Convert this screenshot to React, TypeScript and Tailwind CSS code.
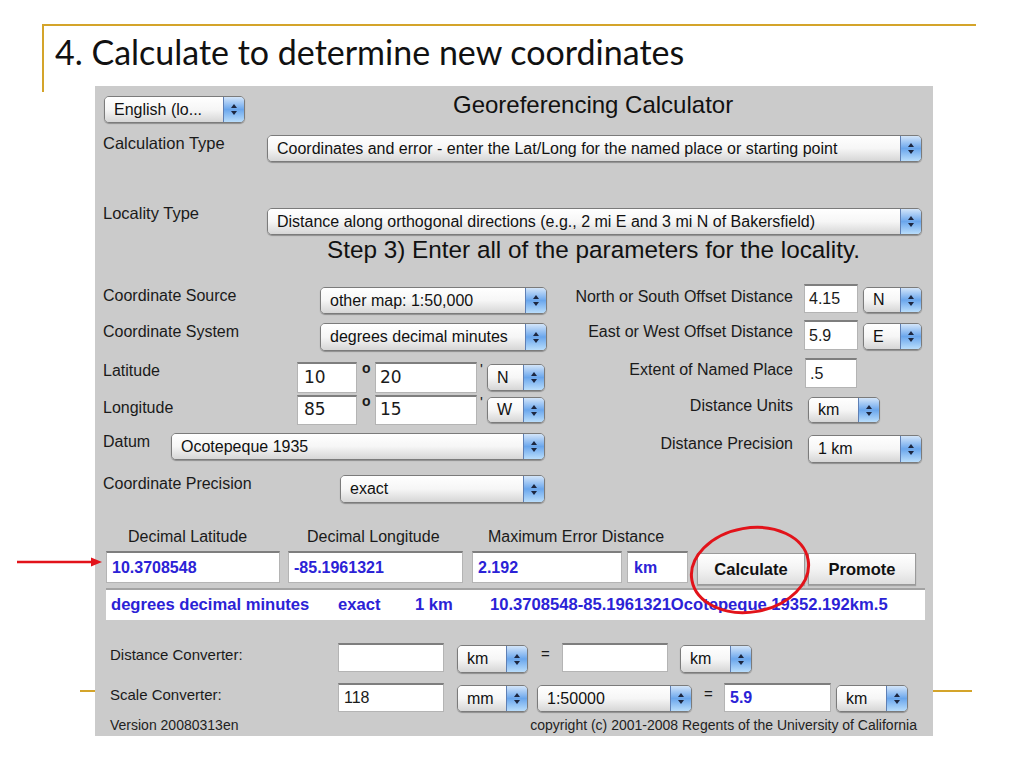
import type { ReactNode } from "react"

const sans = "font-['Liberation_Sans',Arial,sans-serif]"

function Arrows() {
  return (
    <svg width="8" height="13" viewBox="0 0 8 13">
      <path d="M4 1L7 5H1z" fill="#1d2740" />
      <path d="M4 12L7 8H1z" fill="#1d2740" />
    </svg>
  )
}

function Pop({ className, children }: { className: string; children: ReactNode }) {
  return (
    <div
      className={`flex shrink-0 items-stretch overflow-hidden rounded-[5px] border border-[#7b7b7b] shadow-[0_1px_1px_rgba(0,0,0,0.3)] ${className}`}
    >
      <div className="flex flex-1 items-center overflow-hidden whitespace-nowrap bg-linear-to-b from-white via-[#f6f6f6] to-[#d6d6d6] pl-[9px] text-[16px] text-[#111]">
        {children}
      </div>
      <div className="flex w-[21px] shrink-0 items-center justify-center border-l border-[#5e7fb4] bg-linear-to-b from-[#d3e5f9] via-[#6aa6ec] to-[#b9ddfb]">
        <Arrows />
      </div>
    </div>
  )
}

function Box({ className, children }: { className: string; children?: ReactNode }) {
  return (
    <div
      className={`flex shrink-0 bg-white border border-[#b4b4b4] border-t-[#7e7e7e] border-t-2 ${className}`}
    >
      {children}
    </div>
  )
}

function Btn({ children }: { children: ReactNode }) {
  return (
    <div className="flex h-[32px] w-[108px] shrink-0 items-center justify-center border border-[#9a9a9a] bg-linear-to-b from-white via-[#f3f3f3] to-[#dedede] text-[16.5px] font-bold text-[#111] shadow-[0_1px_1px_rgba(0,0,0,0.2)]">
      {children}
    </div>
  )
}

export default function App() {
  return (
    <div className={`relative h-[768px] w-[1024px] overflow-hidden bg-white ${sans}`}>
      {/* slide rule behind the screenshot */}
      <div className="absolute left-[80px] top-[690px] h-[2px] w-[892px] bg-[#d4a42a]" />

      <div className="ml-[42px] mt-[24px] h-[68px] w-[934px] border-l-2 border-t-2 border-[#d4a42a] pl-[11px] pt-[5px]">
        <h1 className="font-['Lato','Open_Sans',sans-serif] text-[34px] leading-[42px] text-[#111]">
          4. Calculate to determine new coordinates
        </h1>
      </div>

      <div className="relative z-10 -mt-[6px] ml-[95px] flex h-[650px] w-[838px] flex-col bg-[#cbcbcb] text-[16px] text-[#1a1a1a]">
        {/* header */}
        <div className="mt-[10px] flex h-[27px] items-center pl-[9px]">
          <Pop className="h-[27px] w-[141px]">English (lo...</Pop>
          <span className="mb-[10px] ml-[208px] text-[24px] leading-none text-[#111]">Georeferencing Calculator</span>
        </div>

        <div className="mt-[12px] flex h-[27px] items-start pl-[8px]">
          <span className="w-[164px] text-[16.5px] leading-[17px]">Calculation Type</span>
          <Pop className="h-[27px] w-[655px]">
            Coordinates and error - enter the Lat/Long for the named place or starting point
          </Pop>
        </div>

        <div className="mt-[46px] flex h-[27px] items-start pl-[8px]">
          <span className="-mt-[3px] w-[164px] text-[16.5px] leading-[17px]">Locality Type</span>
          <Pop className="h-[27px] w-[655px]">
            Distance along orthogonal directions (e.g., 2 mi E and 3 mi N of Bakersfield)
          </Pop>
        </div>

        <div className="mt-[2px] h-[26px] pl-[232px] text-[24.3px] leading-[26px] text-[#111]">
          Step 3) Enter all of the parameters for the locality.
        </div>

        {/* parameters */}
        <div className="mt-[21px] flex">
          <div className="flex w-[452px] flex-col pl-[8px]">
            <div className="mt-[3px] flex h-[27px]">
              <span className="w-[217px] leading-[17px]">Coordinate Source</span>
              <Pop className="h-[27px] w-[227px]">other map: 1:50,000</Pop>
            </div>
            <div className="mt-[9px] flex h-[28px]">
              <span className="w-[217px] leading-[17px]">Coordinate System</span>
              <Pop className="h-[28px] w-[227px]">degrees decimal minutes</Pop>
            </div>
            <div className="mt-[11px] flex h-[31px] items-center">
              <span className="w-[194px] self-start leading-[17px]">Latitude</span>
              <Box className="h-[31px] w-[60px] items-end pb-[2px] pl-[6px] font-['DejaVu_Sans',sans-serif] text-[17px]">10</Box>
              <span className="w-[18px] self-start pl-[5px] text-[14px] font-bold leading-[13px]">o</span>
              <Box className="h-[31px] w-[102px] items-end pb-[2px] pl-[4px] font-['DejaVu_Sans',sans-serif] text-[17px]">20</Box>
              <span className="w-[10px] self-start pl-[3px] text-[15px] leading-[14px]">'</span>
              <Pop className="h-[27px] w-[58px]">N</Pop>
            </div>
            <div className="mt-[2px] flex h-[30px] items-center">
              <span className="w-[194px] self-start pt-[4px] leading-[17px]">Longitude</span>
              <Box className="h-[30px] w-[60px] items-end pb-[2px] pl-[6px] font-['DejaVu_Sans',sans-serif] text-[17px]">85</Box>
              <span className="w-[18px] self-start pl-[5px] text-[14px] font-bold leading-[13px]">o</span>
              <Box className="h-[30px] w-[102px] items-end pb-[2px] pl-[4px] font-['DejaVu_Sans',sans-serif] text-[17px]">15</Box>
              <span className="w-[10px] self-start pl-[3px] text-[15px] leading-[14px]">'</span>
              <Pop className="h-[26px] w-[58px]">W</Pop>
            </div>
            <div className="mt-[8px] flex h-[27px]">
              <span className="w-[68px] leading-[17px]">Datum</span>
              <Pop className="h-[27px] w-[374px]">Ocotepeque 1935</Pop>
            </div>
            <div className="mt-[15px] flex h-[28px]">
              <span className="w-[237px] leading-[17px]">Coordinate Precision</span>
              <Pop className="h-[28px] w-[205px]">exact</Pop>
            </div>
          </div>

          <div className="flex flex-col">
            <div className="flex h-[29px]">
              <span className="w-[246px] pt-[4px] text-right leading-[17px]">North or South Offset Distance</span>
              <Box className="ml-[11px] h-[29px] w-[54px] items-center pl-[4px]">4.15</Box>
              <Pop className="ml-[5px] mt-[3px] h-[26px] w-[59px]">N</Pop>
            </div>
            <div className="mt-[7px] flex h-[30px]">
              <span className="w-[246px] pt-[3px] text-right leading-[17px]">East or West Offset Distance</span>
              <Box className="ml-[11px] h-[30px] w-[54px] items-center pl-[4px]">5.9</Box>
              <Pop className="ml-[5px] mt-[3px] h-[27px] w-[59px]">E</Pop>
            </div>
            <div className="mt-[8px] flex h-[30px]">
              <span className="w-[246px] pt-[3px] text-right leading-[17px]">Extent of Named Place</span>
              <Box className="ml-[12px] h-[30px] w-[52px] items-center pl-[4px]">.5</Box>
            </div>
            <div className="mt-[9px] flex h-[26px]">
              <span className="w-[246px] text-right leading-[17px]">Distance Units</span>
              <Pop className="ml-[15px] h-[26px] w-[72px]">km</Pop>
            </div>
            <div className="mt-[12px] flex h-[28px]">
              <span className="w-[246px] text-right leading-[17px]">Distance Precision</span>
              <Pop className="ml-[15px] h-[28px] w-[114px]">1 km</Pop>
            </div>
          </div>
        </div>

        {/* results */}
        <div className="mt-[26px] flex h-[16px] pl-[33px] leading-[16px]">
          <span className="w-[179px]">Decimal Latitude</span>
          <span className="w-[181px]">Decimal Longitude</span>
          <span>Maximum Error Distance</span>
        </div>

        <div className="mt-[6px] flex h-[34px] items-start pl-[11px] text-[16px] font-bold text-[#2b22d6]">
          <Box className="h-[32px] w-[174px] pl-[5px] pt-[3px]">10.3708548</Box>
          <Box className="ml-[8px] h-[32px] w-[175px] pl-[5px] pt-[3px]">-85.1961321</Box>
          <Box className="ml-[9px] h-[32px] w-[150px] pl-[5px] pt-[3px]">2.192</Box>
          <Box className="ml-[5px] h-[32px] w-[61px] pl-[6px] pt-[3px]">km</Box>
          <div className="ml-[9px] mt-[2px] flex">
            <Btn>Calculate</Btn>
            <div className="ml-[3px] flex">
              <Btn>Promote</Btn>
            </div>
          </div>
        </div>

        <div className="ml-[11px] mt-[3px] flex h-[32px] w-[819px] items-center border-t-2 border-[#a3a3a3] bg-white pl-[5px] text-[16.6px] font-bold text-[#2b22d6]">
          <span className="w-[227px]">degrees decimal minutes</span>
          <span className="w-[77px]">exact</span>
          <span className="w-[75px]">1 km</span>
          <span>10.3708548-85.1961321Ocotepeque 19352.192km.5</span>
        </div>

        {/* converters */}
        <div className="mt-[23px] flex h-[30px] pl-[15px] text-[15px]">
          <span className="w-[228px] pt-[3px] leading-[17px]">Distance Converter:</span>
          <Box className="h-[29px] w-[106px]" />
          <Pop className="ml-[13px] mt-[2px] h-[28px] w-[71px]">km</Pop>
          <span className="w-[34px] pl-[13px] pt-[2px] leading-[17px]">=</span>
          <Box className="h-[29px] w-[106px]" />
          <Pop className="ml-[12px] mt-[2px] h-[28px] w-[72px]">km</Pop>
        </div>

        <div className="mt-[10px] flex h-[29px] pl-[15px] text-[15px]">
          <span className="w-[228px] pt-[3px] leading-[17px]">Scale Converter:</span>
          <Box className="h-[29px] w-[106px] items-center pl-[5px] text-[16px]">118</Box>
          <Pop className="ml-[13px] mt-[2px] h-[27px] w-[71px]">mm</Pop>
          <Pop className="ml-[9px] mt-[2px] h-[27px] w-[155px]">1:50000</Pop>
          <span className="w-[32px] pl-[12px] pt-[2px] leading-[17px]">=</span>
          <Box className="h-[29px] w-[107px] items-center pl-[5px] text-[16px] font-bold text-[#2b22d6]">5.9</Box>
          <Pop className="ml-[5px] mt-[2px] h-[27px] w-[72px]">km</Pop>
        </div>

        <div className="mt-[5px] flex h-[16px] justify-between pl-[15px] pr-[16px] text-[14px] leading-[16px] text-[#222]">
          <span>Version 20080313en</span>
          <span>copyright (c) 2001-2008 Regents of the University of California</span>
        </div>
      </div>

      {/* annotations */}
      <svg className="absolute left-0 top-0 z-20" width="1024" height="768" viewBox="0 0 1024 768" fill="none">
        <line x1="17" y1="562" x2="94" y2="562" stroke="#e2131a" strokeWidth="2.5" />
        <path d="M102 562L91 557.5V566.5z" fill="#e2131a" />
        <ellipse cx="750" cy="570" rx="59" ry="42" stroke="#e2131a" strokeWidth="3" transform="rotate(-10 750 570)" />
      </svg>
    </div>
  )
}
